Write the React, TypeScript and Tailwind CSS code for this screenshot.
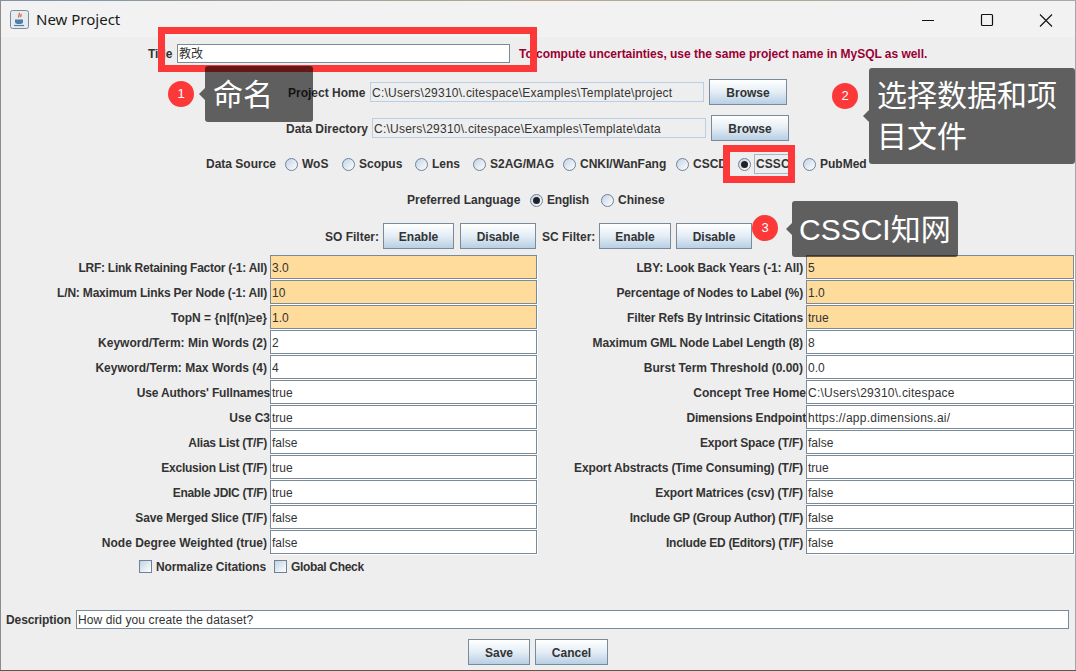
const sans = "font-['Liberation_Sans','Noto_Sans_CJK_SC',sans-serif]";

const leftFields = [
  ['LRF: Link Retaining Factor (-1: All)', '3.0', true, 'tracking-[-0.25px]'],
  ['L/N: Maximum Links Per Node (-1: All)', '10', true, 'tracking-[-0.19px]'],
  ['TopN = {n|f(n)≥e}', '1.0', true, ''],
  ['Keyword/Term: Min Words (2)', '2', false, ''],
  ['Keyword/Term: Max Words (4)', '4', false, ''],
  ["Use Authors' Fullnames", 'true', false, 'tracking-[-0.14px] mr-[-3px]'],
  ['Use C3', 'true', false, 'mr-[-3px]'],
  ['Alias List (T/F)', 'false', false, 'tracking-[-0.25px]'],
  ['Exclusion List (T/F)', 'true', false, 'tracking-[-0.25px]'],
  ['Enable JDIC (T/F)', 'true', false, 'tracking-[-0.3px]'],
  ['Save Merged Slice (T/F)', 'false', false, 'tracking-[-0.13px]'],
  ['Node Degree Weighted (true)', 'false', false, ''],
] as const;

const rightFields = [
  ['LBY: Look Back Years (-1: All)', '5', true, 'tracking-[-0.13px]'],
  ['Percentage of Nodes to Label (%)', '1.0', true, 'tracking-[-0.13px]'],
  ['Filter Refs By Intrinsic Citations', 'true', true, 'tracking-[-0.18px]'],
  ['Maximum GML Node Label Length (8)', '8', false, 'tracking-[-0.12px]'],
  ['Burst Term Threshold (0.00)', '0.0', false, ''],
  ['Concept Tree Home', 'C:\\Users\\29310\\.citespace', false, 'mr-[-3px]'],
  ['Dimensions Endpoint', 'https://app.dimensions.ai/', false, 'tracking-[-0.2px] mr-[-3px]'],
  ['Export Space (T/F)', 'false', false, 'tracking-[-0.17px]'],
  ['Export Abstracts (Time Consuming) (T/F)', 'true', false, 'tracking-[-0.13px]'],
  ['Export Matrices (csv) (T/F)', 'false', false, 'tracking-[-0.11px]'],
  ['Include GP (Group Author) (T/F)', 'false', false, 'tracking-[-0.26px]'],
  ['Include ED (Editors) (T/F)', 'false', false, 'tracking-[-0.27px]'],
] as const;

const sources = [
  ['WoS', 'w-[57px]'],
  ['Scopus', 'w-[73px]'],
  ['Lens', 'w-[58px]'],
  ['S2AG/MAG', 'w-[90px]'],
  ['CNKI/WanFang', 'w-[113px]'],
  ['CSCD', 'w-[62px]'],
];

function JavaButton({ label, className }: { label: string; className: string }) {
  return (
    <button className={`h-[26px] shrink-0 border border-[#7a8a99] bg-gradient-to-b from-white via-[#e4edf5] to-[#b8cfe5] pt-[2px] text-[12px] font-bold text-[#333333] ${className}`}>
      {label}
    </button>
  );
}

function Radio({ checked = false }: { checked?: boolean }) {
  return (
    <span className="flex h-[13px] w-[13px] shrink-0 items-center justify-center rounded-full border border-[#6d8299] bg-gradient-to-br from-[#c3d3e3] to-white">
      {checked && <span className="h-[7px] w-[7px] rounded-full bg-[#222222]" />}
    </span>
  );
}

function Field({ label, value, hot, tune, labelWidth, inputWidth }: { label: string; value: string; hot: boolean; tune: string; labelWidth: string; inputWidth: string }) {
  const isPath = value.includes('\\') || value.includes('/');
  return (
    <div className="flex h-[25px] items-center">
      <span className={`${labelWidth} shrink-0 whitespace-nowrap pr-[3px] pt-[2px] text-right text-[12px] font-bold text-[#333333]`}>
        <span className={`relative inline-block ${tune}`}>{label}</span>
      </span>
      <span className={`relative flex h-[24px] ${inputWidth} shrink-0 items-center overflow-hidden border border-[#7a8a99] pl-px pt-[2px] text-[12px] text-[#333333] shadow-[1px_1px_0_#ffffff] ${isPath ? 'tracking-[0.24px]' : ''} ${hot ? 'bg-[#ffdc9c]' : 'bg-white'}`}>
        {value}
      </span>
    </div>
  );
}

function Callout({ n, className, dotClass, children }: { n: number; className: string; dotClass: string; children: React.ReactNode }) {
  return (
    <>
      <span className={`absolute flex h-[26px] w-[26px] items-center justify-center rounded-full bg-[#fc3838] text-[13px] text-white ${dotClass}`}>{n}</span>
      <div className={`absolute rounded-[3px] bg-black/60 text-white ${className}`}>
        <span className="absolute left-[-6px] top-1/2 h-0 w-0 -translate-y-1/2 border-y-[6px] border-r-[6px] border-y-transparent border-r-black/60" />
        {children}
      </div>
    </>
  );
}

export default function App() {
  return (
    <div className={`relative h-[671px] w-[1076px] overflow-hidden bg-[#eeeeee] ${sans}`}>
      {/* Window title bar */}
      <div className="flex h-[37px] items-center bg-[#f2f2f2] pl-[10px] pt-[2px]">
        <svg width="19" height="19" viewBox="0 0 19 19" className="shrink-0">
          <rect x="0.5" y="0.5" width="18" height="18" rx="2" fill="#e6ebf0" stroke="#7d8b99" />
          <path d="M9 3c1.500 1.500-1.500 2.500 0 4.500M11 4c.8 1-1 1.500 0 3" stroke="#d9541e" strokeWidth="1.2" fill="none" />
          <path d="M5 9.500h8v2.500c0 1.500-1.500 2-4 2s-4-.5-4-2z" fill="#4f7fa8" />
          <path d="M4 15.500h10" stroke="#4f7fa8" strokeWidth="1.2" />
        </svg>
        <span className="ml-[7px] text-[15px] text-[#1a1a1a] font-['Noto_Sans',sans-serif]">New Project</span>
        <svg width="131" height="14" viewBox="0 0 131 14" className="ml-auto mr-[23px] shrink-0" fill="none" stroke="#111111">
          <path d="M0 7.500h12" />
          <rect x="59.500" y="1.500" width="11" height="11" rx="1" strokeWidth="1.2" />
          <path d="M118 1.500l12 12M130 1.500l-12 12" strokeWidth="1.1" />
        </svg>
      </div>

      {/* Title */}
      <div className="flex h-[33px] items-center pl-[148px]">
        <span className="w-[26px] text-[12px] font-bold text-[#333333]">Title</span>
        <span className="ml-[3px] flex h-[19px] w-[333px] items-center border border-[#7a8a99] bg-white pl-[1px] text-[12px] text-[#333333]">教改</span>
        <span className="ml-[9px] text-[12px] font-bold tracking-[-0.03px] text-[#990033]">To compute uncertainties, use the same project name in MySQL as well.</span>
      </div>

      {/* Paths */}
      <div className="mt-[9px] flex h-[26px] items-center pl-[288px]">
        <span className="w-[79px] whitespace-nowrap pt-[2px] text-[12px] font-bold text-[#333333]">Project Home</span>
        <span className="ml-[3px] flex h-[20px] w-[334px] items-center whitespace-nowrap border border-[#b8cfe5] pl-[1px] pt-[2px] text-[12px] tracking-[0.24px] text-[#333333]">C:\Users\29310\.citespace\Examples\Template\project</span>
        <JavaButton label="Browse" className="ml-[5px] w-[78px]" />
      </div>
      <div className="mt-[10px] flex h-[26px] items-center pl-[286px]">
        <span className="w-[83px] whitespace-nowrap pt-[2px] text-[12px] font-bold text-[#333333]">Data Directory</span>
        <span className="ml-[3px] flex h-[20px] w-[334px] items-center whitespace-nowrap border border-[#b8cfe5] pl-[1px] pt-[2px] text-[12px] tracking-[0.24px] text-[#333333]">C:\Users\29310\.citespace\Examples\Template\data</span>
        <JavaButton label="Browse" className="ml-[5px] w-[78px]" />
      </div>

      {/* Data source */}
      <div className="mt-[10px] flex h-[26px] items-center pl-[206px] text-[12px] font-bold text-[#333333]">
        <span className="w-[79px]">Data Source</span>
        {sources.map(([s, w]) => (
          <span key={s} className={`flex ${w} items-center gap-[4px] whitespace-nowrap`}>
            <Radio />
            {s}
          </span>
        ))}
        <span className="flex w-[65px] items-center gap-[3px]">
          <Radio checked />
          <span className="border border-[#a3b8cc] px-px tracking-[0.1px]">CSSCI</span>
        </span>
        <span className="flex items-center gap-[4px]">
          <Radio />
          PubMed
        </span>
      </div>

      {/* Language */}
      <div className="mt-[10px] flex h-[26px] items-center pl-[407px] text-[12px] font-bold text-[#333333]">
        <span className="w-[123px]">Preferred Language</span>
        <span className="flex w-[71px] items-center gap-[4px]"><Radio checked /><span className="tracking-[-0.2px]">English</span></span>
        <span className="flex items-center gap-[4px]"><Radio />Chinese</span>
      </div>

      {/* Filters */}
      <div className="mt-[10px] flex h-[26px] items-center pl-[325px] text-[12px] font-bold text-[#333333]">
        <span className="w-[58px] pt-[2px]">SO Filter:</span>
        <JavaButton label="Enable" className="w-[71px]" />
        <JavaButton label="Disable" className="ml-[6px] w-[76px]" />
        <span className="ml-[6px] w-[57px] whitespace-nowrap pt-[2px]">SC Filter:</span>
        <JavaButton label="Enable" className="w-[72px]" />
        <JavaButton label="Disable" className="ml-[5px] w-[76px]" />
      </div>

      {/* Parameter grid */}
      <div className="mt-[5px] flex">
        <div className="flex flex-col">
          {leftFields.map(([label, value, hot, tune]) => (
            <Field key={label} label={label} value={value} hot={hot} tune={tune} labelWidth="w-[270px]" inputWidth="w-[267px]" />
          ))}
        </div>
        <div className="flex flex-col">
          {rightFields.map(([label, value, hot, tune]) => (
            <Field key={label} label={label} value={value} hot={hot} tune={tune} labelWidth="w-[269px]" inputWidth="w-[268px]" />
          ))}
        </div>
      </div>

      {/* Checkboxes */}
      <div className="flex h-[24px] items-center pl-[139px] text-[12px] font-bold text-[#333333]">
        <span className="h-[13px] w-[13px] border border-[#6d8299] bg-gradient-to-br from-[#c3d3e3] to-white" />
        <span className="ml-[4px] w-[118px] whitespace-nowrap pt-[2px] tracking-[-0.1px]">Normalize Citations</span>
        <span className="h-[13px] w-[13px] border border-[#6d8299] bg-gradient-to-br from-[#c3d3e3] to-white" />
        <span className="ml-[4px] whitespace-nowrap pt-[2px] tracking-[-0.33px]">Global Check</span>
      </div>

      {/* Description */}
      <div className="mt-[31px] flex h-[20px] items-center pl-[6px] text-[12px]">
        <span className="w-[70px] pt-[2px] font-bold tracking-[-0.1px] text-[#333333]">Description</span>
        <span className="flex h-[19px] w-[993px] items-center border border-[#7a8a99] bg-white pl-[1px] pt-[2px] tracking-[0.1px] text-[#333333]">How did you create the dataset?</span>
      </div>

      {/* Actions */}
      <div className="mt-[10px] flex justify-center gap-[5px]">
        <JavaButton label="Save" className="w-[62px]" />
        <JavaButton label="Cancel" className="w-[73px]" />
      </div>

      {/* Window edge over the desktop behind it */}
      <div className="absolute inset-x-0 top-0 h-px bg-gradient-to-r from-[#7f93a8] via-[#b5aa8e] to-[#a8a8a8]" />
      <div className="absolute inset-y-0 left-0 w-px bg-[#8c8c8c]" />
      <div className="absolute inset-y-0 right-0 w-px bg-[#a6a6a6]" />
      <div className="absolute inset-x-0 bottom-0 h-px bg-[#5e5648]" />

      {/* Annotations */}
      <div className="absolute left-[158px] top-[27px] h-[45px] w-[379px] border-[7px] border-[#fc3838]" />
      <div className="absolute left-[723px] top-[145px] h-[38px] w-[72px] border-[7px] border-[#fc3838]" />
      <Callout n={1} dotClass="left-[168px] top-[81px]" className="left-[205px] top-[66px] flex h-[56px] w-[108px] items-center pl-[8px] text-[30px]">命名</Callout>
      <Callout n={2} dotClass="left-[832px] top-[83px]" className="left-[869px] top-[68px] h-[96px] w-[206px] px-[8px] pt-[7px] text-[30px] leading-[41px]">选择数据和项目文件</Callout>
      <Callout n={3} dotClass="left-[752px] top-[215px]" className="left-[792px] top-[201px] flex h-[56px] w-[166px] items-center whitespace-nowrap pl-[7px] text-[30px]">CSSCI知网</Callout>
    </div>
  );
}
